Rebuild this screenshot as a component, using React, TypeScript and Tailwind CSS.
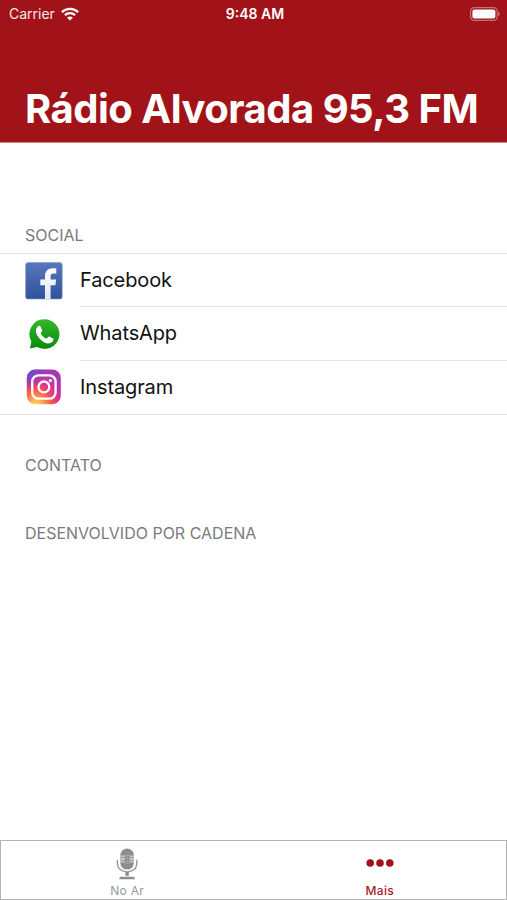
import type {ReactNode} from "react";
import clsx from "clsx";

const WifiIcon = () => (
    <svg width="18" height="14" viewBox="0 0 18 14" fill="none" stroke="white" strokeWidth="2.3">
        <path d="M.9 5.1C5.4.7 12.6.7 17.1 5.1"/>
        <path d="M3.9 8.2c2.9-2.7 7.3-2.7 10.2 0"/>
        <path d="M9 13.6 6.1 10.7c1.7-1.5 4.1-1.5 5.8 0Z" fill="white" stroke="none"/>
    </svg>
)

const BatteryIcon = () => (
    <svg width="31" height="14" viewBox="0 0 31 14">
        <rect x=".6" y=".6" width="26.6" height="12.8" rx="3.6" fill="none" stroke="white" strokeOpacity=".4" strokeWidth="1.2"/>
        <rect x="2.4" y="2.4" width="23" height="9.2" rx="2" fill="white"/>
        <path d="M28.4 4.8c1.8.6 1.8 3.8 0 4.4Z" fill="white" fillOpacity=".45"/>
    </svg>
)

const FacebookIcon = () => (
    <svg width="38" height="38" viewBox="0 0 38 38">
        <defs>
            <linearGradient id="fb" x1="0" y1="0" x2="0" y2="1">
                <stop offset="0" stopColor="#5877bd"/>
                <stop offset="1" stopColor="#2f529d"/>
            </linearGradient>
            <linearGradient id="fb-letter" x1="0" y1="0" x2="0" y2="1">
                <stop offset="0" stopColor="#ffffff"/>
                <stop offset="1" stopColor="#dfe6f3"/>
            </linearGradient>
        </defs>
        <rect x=".6" y=".6" width="36.6" height="36.4" rx="2.6" fill="url(#fb)" stroke="#8093bd" strokeWidth=".6"/>
        <path d="M20 37V23.3h-4.7v-5.7H20V14c0-5 3-7.8 7.6-7.8 1.6 0 2.8.1 3.7.2v5h-2.8c-2.2 0-2.9 1-2.9 2.9v3.3h5.5l-.7 5.7h-4.8V37Z" fill="url(#fb-letter)"/>
    </svg>
)

const WhatsAppIcon = () => (
    <svg width="38" height="38" viewBox="0 0 38 38">
        <defs>
            <linearGradient id="wa" x1="0" y1="0" x2="0" y2="1">
                <stop offset="0" stopColor="#34b82c"/>
                <stop offset="1" stopColor="#078a0c"/>
            </linearGradient>
        </defs>
        <path d="M19.3 4.3A14.8 14.8 0 0 0 6.4 26.5L4.9 33.4l7.3-1.5A14.8 14.8 0 1 0 19.3 4.3Z" fill="url(#wa)"/>
        <path d="M13.5 11.1c.9-.5 1.8-.3 2.2.6l1.5 3.5c.3.9-1.5 2.3-1.5 3 0 .9 3.5 5 5.7 5.4.9.1 1.8-2.3 2.8-2.1l4 2.1c.7.4.1 2.8-1.1 3.7-3.6 2.6-8.7.2-12.2-3.4-3.7-3.8-6-9.6-1.4-12.8Z" fill="white"/>
    </svg>
)

const InstagramIcon = () => (
    <svg width="38" height="38" viewBox="0 0 38 38">
        <defs>
            <radialGradient id="ig" cx=".27" cy="1.05" r="1">
                <stop offset="0" stopColor="#ffdb73"/>
                <stop offset=".15" stopColor="#fdbb55"/>
                <stop offset=".45" stopColor="#f55a4a"/>
                <stop offset=".7" stopColor="#d6309a"/>
                <stop offset="1" stopColor="#a638b5"/>
            </radialGradient>
            <radialGradient id="ig-blue" cx="0" cy="0" r=".6">
                <stop offset="0" stopColor="#3b63dc"/>
                <stop offset="1" stopColor="#7a3cc8" stopOpacity="0"/>
            </radialGradient>
        </defs>
        <rect x="1.8" y="1.4" width="34" height="34.8" rx="8.5" fill="url(#ig)"/>
        <rect x="1.8" y="1.4" width="34" height="34.8" rx="8.5" fill="url(#ig-blue)"/>
        <g fill="none" stroke="white" strokeWidth="2.3">
            <rect x="7.2" y="7.3" width="23.4" height="23.4" rx="6.3"/>
            <circle cx="18.9" cy="18.9" r="5.4"/>
        </g>
        <circle cx="25.4" cy="12.6" r="1.6" fill="white"/>
    </svg>
)

const MicIcon = () => (
    <svg width="22" height="32" viewBox="0 0 22 32" fill="none">
        <rect x="4.4" y=".6" width="13.4" height="21" rx="6.7" fill="#8d8d8d"/>
        <path d="M4.4 8.4h4.5M4.4 11h4.5M4.4 13.6h4.5M13.3 8.4h4.5M13.3 11h4.5M13.3 13.6h4.5" stroke="#c6c6c6" strokeWidth="1.8"/>
        <path d="M8.7 7.3h4.8M11 7.3v8M8.7 15.1h4.8" stroke="#b0b0b0" strokeWidth=".8"/>
        <path d="M1.4 11.8v3.4c0 5.4 4.3 8.7 9.7 8.7s9.7-3.3 9.7-8.7v-3.4" stroke="#999" strokeWidth="1.4"/>
        <path d="M9.4 24h3.4v3.8H9.4Z" fill="#8d8d8d"/>
        <path d="M3.3 31.2c0-2 1-2.5 2.6-2.5h10.4c1.6 0 2.6.5 2.6 2.5Z" fill="#8d8d8d"/>
    </svg>
)

const DotsIcon = () => (
    <svg width="28" height="8" viewBox="0 0 28 8" fill="#a60f19">
        <circle cx="4.2" cy="4" r="3.8"/>
        <circle cx="14" cy="4" r="3.8"/>
        <circle cx="23.8" cy="4" r="3.8"/>
    </svg>
)

const links = [
    {name: "Facebook", icon: <FacebookIcon/>, spacing: "tracking-[-0.12px]"},
    {name: "WhatsApp", icon: <WhatsAppIcon/>, spacing: "tracking-[-0.12px]"},
    {name: "Instagram", icon: <InstagramIcon/>, spacing: "tracking-[-0.12px]"},
]

function SectionTitle({children, className}: { children: ReactNode, className?: string }) {
    return <h2 className={clsx("px-[25px] text-base leading-5 text-[#7b7b7b]", className)}>{children}</h2>
}

export default function App() {
    return (
        <div className="flex h-[900px] w-[507px] flex-col bg-white font-['Inter',sans-serif]">
            <header className="flex h-[143px] flex-col justify-between border-b border-[#c98a8d] bg-[#a21319] text-white">
                <div className="grid h-[27px] grid-cols-3 items-center pr-[6px] pl-[9px]">
                    <div className="flex items-center gap-[6px] text-sm text-white/90">
                        <span>Carrier</span>
                        <WifiIcon/>
                    </div>
                    <p className="text-center text-sm font-semibold">9:48 AM</p>
                    <div className="flex justify-end">
                        <BatteryIcon/>
                    </div>
                </div>
                <h1 className="px-[25px] pb-[9px] text-[40px] leading-12 font-bold tracking-[-0.5px] whitespace-nowrap">
                    Rádio Alvorada 95,3 FM
                </h1>
            </header>

            <main className="flex-1">
                <SectionTitle className="mt-[82px]">SOCIAL</SectionTitle>
                <ul className="mt-2 border-y border-[#e4e4e4]">
                    {links.map(({name, icon, spacing}, index) => (
                        <li key={name} className="flex h-[53.3px] items-center pl-[25px]">
                            {icon}
                            <span
                                className={clsx(
                                    "ml-[17px] flex h-full flex-1 items-center border-[#e4e4e4] text-xl text-[#111]",
                                    spacing,
                                    index < links.length - 1 && "border-b",
                                )}
                            >
                                {name}
                            </span>
                        </li>
                    ))}
                </ul>
                <SectionTitle className="mt-10">CONTATO</SectionTitle>
                <SectionTitle className="mt-12">DESENVOLVIDO POR CADENA</SectionTitle>
            </main>

            <nav className="grid h-[60px] grid-cols-2 border border-[#b3b3b3] text-xs leading-4">
                <div className="flex flex-col items-center pt-[7px] text-[#999]">
                    <MicIcon/>
                    <span className="mt-[3px] tracking-[0.3px]">No Ar</span>
                </div>
                <div className="flex flex-col items-center pt-[18px] text-[#a8222b]">
                    <DotsIcon/>
                    <span className="mt-4 font-medium tracking-[0.3px]">Mais</span>
                </div>
            </nav>
        </div>
    )
}
